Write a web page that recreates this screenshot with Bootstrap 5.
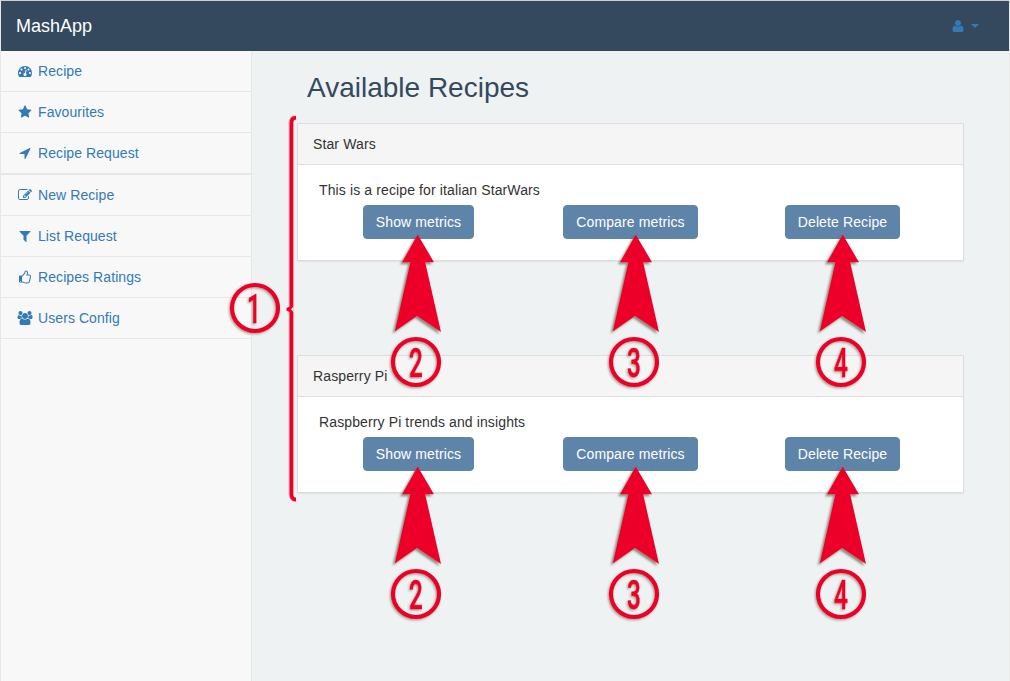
<!DOCTYPE html>
<html lang="en">
<head>
<meta charset="utf-8">
<title>MashApp</title>
<meta name="viewport" content="width=device-width, initial-scale=1">
<link href="https://cdn.jsdelivr.net/npm/bootstrap@5.3.0/dist/css/bootstrap.min.css" rel="stylesheet">
<style>
  body { font: 14px/20px "Liberation Sans", Arial, sans-serif; color: #333; background: #eef2f3; }
  .frame { height: 681px; border: 1px solid #e7e7e7; border-top-color: #cbd0cd; border-bottom: 0; overflow: hidden; }
  .topbar { height: 50px; background: #34495e; padding: 0 30px 0 15px; }
  .topbar .navbar-brand { font-size: 18px; line-height: 20px; color: #fff; padding: 0; }
  .user-menu { color: #337ab7; gap: 4px; }
  .caret { border-top: 4px solid; border-left: 4px solid transparent; border-right: 4px solid transparent; }
  .side { width: 251px; background: #f8f8f8; border-right: 1px solid #e7e7e7; letter-spacing: .08px; }
  .side .nav-link { color: #337ab7; padding: 10px 15px; border-bottom: 1px solid #e7e7e7; gap: 4px; }
  .side .nav + .nav { border-top: 1px solid #e7e7e7; }
  .ico { width: 18px; height: 14px; fill: currentColor; flex: none; }
  .main { padding: 0 45px; }
  .main h1 { font-size: 28px; line-height: 32px; font-weight: 400; color: #34495e; margin: 21px 0 19px 10px; }
  .recipe { width: 667px; height: 138px; margin-bottom: 94px; border: 1px solid #ddd; border-radius: 0; box-shadow: 0 1px 1px rgba(0,0,0,.05); color: #333; letter-spacing: .12px; }
  .recipe .card-header { padding: 10px 15px; background: #f5f5f5; border-bottom: 1px solid #ddd; border-radius: 0; }
  .recipe .card-body { padding: 15px 21px; }
  .recipe .card-text { margin-bottom: 5px; }
  .actions { padding-left: 44px; }
  .btn-recipe { height: 34px; padding: 6px 0; font-size: 14px; line-height: 20px; letter-spacing: .12px; color: #fff; background: #5f84aa; border: 1px solid #5f84aa; border-radius: 4px; }
  .w-show { width: 111px; margin-right: 89px; }
  .w-compare { width: 135px; margin-right: 87px; }
  .w-delete { width: 115px; }
  .notes { pointer-events: none; }
  .notes text { font: 500 40.5px Roboto, sans-serif; text-anchor: middle; stroke: #ec0029; stroke-width: .6px; }
</style>
</head>
<body>
<svg width="0" height="0" class="position-absolute" aria-hidden="true">
  <symbol id="i-dash" viewBox="0 0 1792 1792"><path d="M384 1152q0-53-37.500-90.500t-90.500-37.500-90.500 37.500-37.500 90.500 37.500 90.500 90.500 37.500 90.500-37.500 37.500-90.500zm192-448q0-53-37.500-90.500t-90.500-37.500-90.500 37.500-37.500 90.500 37.500 90.500 90.500 37.500 90.500-37.500 37.500-90.500zm428 481l101-382q6-26-7.500-48.500t-38.500-29.500-48 6.500-30 39.500l-101 382q-60 5-107 43.500t-63 98.500q-20 77 20 146t117 89 146-20 89-117q16-60-6-117t-72-91zm660-33q0-53-37.500-90.500t-90.500-37.500-90.500 37.500-37.500 90.500 37.500 90.500 90.500 37.500 90.500-37.500 37.500-90.500zm-640-640q0-53-37.500-90.500t-90.500-37.500-90.500 37.500-37.500 90.500 37.500 90.500 90.500 37.500 90.500-37.500 37.500-90.500zm448 192q0-53-37.500-90.500t-90.500-37.500-90.500 37.500-37.500 90.500 37.500 90.500 90.500 37.500 90.500-37.500 37.500-90.500zm320 448q0 261-141 483-19 29-54 29h-1402q-35 0-54-29-141-221-141-483 0-182 71-348t191-286 286-191 348-71 348 71 286 191 191 286 71 348z"/></symbol>
  <symbol id="i-star" viewBox="0 0 1792 1792"><path d="M1728 647q0 22-26 48l-363 354 86 500q1 7 1 20 0 21-10.500 35.500t-30.500 14.500q-19 0-40-12l-449-236-449 236q-22 12-40 12-21 0-31.500-14.500t-10.500-35.500q0-6 2-20l86-500-364-354q-25-27-25-48 0-37 56-46l502-73 225-455q19-41 49-41t49 41l225 455 502 73q56 9 56 46z"/></symbol>
  <symbol id="i-arrow" viewBox="0 0 1792 1792"><path d="M1593 349l-640 1280q-17 35-57 35-5 0-15-2-22-5-35.500-22.500t-13.500-39.500v-576h-576q-22 0-39.500-13.500t-22.500-35.500 4-42 29-30l1280-640q13-7 29-7 27 0 45 19 15 14 18.500 34.500t-6.500 39.500z"/></symbol>
  <symbol id="i-edit" viewBox="0 0 1792 1792"><path d="M888 1184l116-116-152-152-116 116v56h96v96h56zm440-720q-16-16-33 1l-350 350q-17 17-1 33t33-1l350-350q17-17 1-33zm80 594v190q0 119-84.500 203.500t-203.500 84.500h-832q-119 0-203.500-84.500t-84.500-203.500v-832q0-119 84.500-203.500t203.500-84.500h832q63 0 117 25 15 7 18 23 3 17-9 29l-49 49q-14 14-32 8-23-6-45-6h-832q-66 0-113 47t-47 113v832q0 66 47 113t113 47h832q66 0 113-47t47-113v-126q0-13 9-22l64-64q15-15 35-7t20 29zm-96-738l288 288-672 672h-288v-288zm444 132l-92 92-288-288 92-92q28-28 68-28t68 28l152 152q28 28 28 68t-28 68z"/></symbol>
  <symbol id="i-filter" viewBox="0 0 1792 1792"><path d="M1595 295q17 41-14 70l-493 493v742q0 42-39 59-13 5-25 5-27 0-45-19l-256-256q-19-19-19-45v-486l-493-493q-31-29-14-70 17-39 59-39h1280q42 0 59 39z"/></symbol>
  <symbol id="i-thumb" viewBox="0 0 1792 1792"><path d="M384 1472q0-26-19-45t-45-19-45 19-19 45 19 45 45 19 45-19 19-45zm1152-640q0-51-39-89.500t-89-38.500h-352q0-58 48-159.500t48-160.500q0-98-32-145t-128-47q-26 26-38 85t-30.500 125.500-59.500 109.500q-22 23-77 91-4 5-23 30t-31.500 41-34.500 42.500-40 44-38.500 35.500-40 27-35.500 9h-32v640h32q13 0 31.500 3t33 6.500 38 11 35 11.500 35.500 12.500 29 10.500q211 73 342 73h121q192 0 192-167 0-26-5-56 30-16 47.500-52.500t17.500-73.500-18-69q53-50 53-119 0-25-10-55.500t-25-47.500q32-1 53.500-47t21.500-81zm128-1q0 89-49 163 9 33 9 69 0 77-38 144 3 21 3 43 0 101-60 178 1 139-85 219.500t-227 80.500h-129q-96 0-189.500-22.500t-216.500-65.500q-116-40-138-40h-288q-53 0-90.500-37.500t-37.500-90.500v-640q0-53 37.500-90.500t90.500-37.500h274q36-24 137-155 58-75 107-128 24-25 35.500-85.500t30.500-126.500 62-108q39-37 90-37 84 0 151 32.500t102 101.500 35 186q0 93-48 192h176q104 0 180 76t76 179z"/></symbol>
  <symbol id="i-users" viewBox="0 0 1920 1792"><path d="M593 896q-162 5-265 128h-134q-82 0-138-40.500t-56-118.500q0-353 124-353 6 0 43.500 21t97.500 42.500 119 21.500q67 0 133-23-5 37-5 66 0 159 93 289zm1071 637q0 120-73 189.500t-194 69.500h-874q-121 0-194-69.500t-73-189.500q0-53 3.500-103.500t14-109 26.500-108.500 43-97.500 62-81 85.500-53.500 111.500-20q10 0 43 21.500t73 48 107 48 135 21.500 135-21.500 107-48 73-48 43-21.500q61 0 111.500 20t85.500 53.500 62 81 43 97.500 26.500 108.500 14 109 3.500 103.500zm-1024-1277q0 106-75 181t-181 75-181-75-75-181 75-181 181-75 181 75 75 181zm704 384q0 159-112.500 271.500t-271.500 112.500-271.500-112.500-112.500-271.500 112.500-271.500 271.500-112.500 271.500 112.500 112.500 271.500zm576 225q0 78-56 118.500t-138 40.500h-134q-103-123-265-128 93-130 93-289 0-29-5-66 66 23 133 23 59 0 119-21.500t97.500-42.500 43.500-21q124 0 124 353zm-128-609q0 106-75 181t-181 75-181-75-75-181 75-181 181-75 181 75 75 181z"/></symbol>
  <symbol id="i-user" viewBox="0 0 1792 1792"><path d="M1600 1405q0 120-73 189.500t-194 69.500h-874q-121 0-194-69.500t-73-189.500q0-53 3.500-103.500t14-109 26.500-108.500 43-97.500 62-81 85.500-53.500 111.500-20q9 0 42 21.500t74.500 48 108 48 133.500 21.500 133.500-21.500 108-48 74.500-48 42-21.500q61 0 111.500 20t85.500 53.500 62 81 43 97.500 26.500 108.500 14 109 3.500 103.500zm-320-893q0 159-112.500 271.500t-271.500 112.500-271.500-112.500-112.500-271.500 112.500-271.500 271.500-112.500 271.500 112.500 112.500 271.500z"/></symbol>
</svg>

<div class="frame d-flex flex-column">
  <nav class="topbar navbar d-flex justify-content-between flex-nowrap">
    <a class="navbar-brand" href="#">MashApp</a>
    <a class="user-menu d-flex align-items-center text-decoration-none" href="#" aria-label="User menu">
      <svg class="ico"><use href="#i-user"/></svg><span class="caret"></span>
    </a>
  </nav>
  <div class="d-flex flex-grow-1">
    <aside class="side flex-shrink-0">
      <ul class="nav flex-column">
        <li><a class="nav-link d-flex align-items-center" href="#"><svg class="ico"><use href="#i-dash"/></svg>Recipe</a></li>
        <li><a class="nav-link d-flex align-items-center" href="#"><svg class="ico"><use href="#i-star"/></svg>Favourites</a></li>
        <li><a class="nav-link d-flex align-items-center" href="#"><svg class="ico"><use href="#i-arrow"/></svg>Recipe Request</a></li>
      </ul>
      <ul class="nav flex-column">
        <li><a class="nav-link d-flex align-items-center" href="#"><svg class="ico"><use href="#i-edit"/></svg>New Recipe</a></li>
        <li><a class="nav-link d-flex align-items-center" href="#"><svg class="ico"><use href="#i-filter"/></svg>List Request</a></li>
        <li><a class="nav-link d-flex align-items-center" href="#"><svg class="ico"><use href="#i-thumb"/></svg>Recipes Ratings</a></li>
        <li><a class="nav-link d-flex align-items-center" href="#"><svg class="ico"><use href="#i-users"/></svg>Users Config</a></li>
      </ul>
    </aside>
    <main class="main flex-grow-1">
      <h1>Available Recipes</h1>
      <section class="card recipe">
        <div class="card-header">Star Wars</div>
        <div class="card-body">
          <p class="card-text">This is a recipe for italian StarWars</p>
          <div class="actions d-flex">
            <button class="btn btn-recipe w-show">Show metrics</button>
            <button class="btn btn-recipe w-compare">Compare metrics</button>
            <button class="btn btn-recipe w-delete">Delete Recipe</button>
          </div>
        </div>
      </section>
      <section class="card recipe">
        <div class="card-header">Rasperry Pi</div>
        <div class="card-body">
          <p class="card-text">Raspberry Pi trends and insights</p>
          <div class="actions d-flex">
            <button class="btn btn-recipe w-show">Show metrics</button>
            <button class="btn btn-recipe w-compare">Compare metrics</button>
            <button class="btn btn-recipe w-delete">Delete Recipe</button>
          </div>
        </div>
      </section>
    </main>
  </div>
</div>

<!-- Numbered callouts lying over the page -->
<svg class="notes position-absolute top-0 start-0" width="1010" height="681" viewBox="0 0 1010 681">
  <defs>
    <filter id="shade" x="-30%" y="-30%" width="160%" height="160%"><feDropShadow dx="-2" dy="2" stdDeviation="1" flood-color="#4a4a30" flood-opacity=".6"/></filter>
    <filter id="soft" x="-30%" y="-30%" width="160%" height="160%"><feDropShadow dx="-1" dy="1.200" stdDeviation=".8" flood-color="#4a4a30" flood-opacity=".5"/></filter>
    <path id="pointer" d="M0 0 16.300 27.700H7.500L23.300 97.500-.7 81.500-23 97 -7.400 27.700H-15.700Z"/>
    <circle id="ring" r="23" fill="none" stroke="#ec0029" stroke-width="4.200"/>
  </defs>
  <path d="M296 117.700h-.5q-4.500 0-4.500 5.300V494q0 5.500 4.500 5.500h.5" fill="none" stroke="#f58ba0" stroke-width="4.400"/>
  <path d="M296 117.700h-.5q-4 0-4 5.300V494q0 5.500 4 5.500h.5" fill="none" stroke="#ec0029" stroke-width="3.600"/>
  <path d="M290 306.500 286.500 308v2.500l3.500 1.800z" fill="#ec0029"/>
  <path d="M293.500 306.500 291 309.300l2.500 2.700z" fill="#eef2f3"/>
  <g fill="#ec0029" filter="url(#shade)">
    <use href="#pointer" x="417.700" y="234.500"/><use href="#pointer" x="635.700" y="234.500"/><use href="#pointer" x="842.700" y="234.500"/>
    <use href="#pointer" x="417.700" y="466.500"/><use href="#pointer" x="635.700" y="466.500"/><use href="#pointer" x="842.700" y="466.500"/>
  </g>
  <g fill="#ec0029" filter="url(#soft)">
    <g transform="translate(255 308)"><use href="#ring"/><text transform="translate(-1.200 14.500) scale(.6 1)">1</text></g>
    <g transform="translate(416 362)"><use href="#ring"/><text transform="translate(0 14.500) scale(.6 1)">2</text></g>
    <g transform="translate(634 362)"><use href="#ring"/><text transform="translate(0 14.500) scale(.6 1)">3</text></g>
    <g transform="translate(841 362)"><use href="#ring"/><text transform="translate(0 14.500) scale(.6 1)">4</text></g>
    <g transform="translate(416 594)"><use href="#ring"/><text transform="translate(0 14.500) scale(.6 1)">2</text></g>
    <g transform="translate(634 594)"><use href="#ring"/><text transform="translate(0 14.500) scale(.6 1)">3</text></g>
    <g transform="translate(841 594)"><use href="#ring"/><text transform="translate(0 14.500) scale(.6 1)">4</text></g>
  </g>
</svg>
<script src="https://cdn.jsdelivr.net/npm/bootstrap@5.3.0/dist/js/bootstrap.bundle.min.js"></script>
</body>
</html>
